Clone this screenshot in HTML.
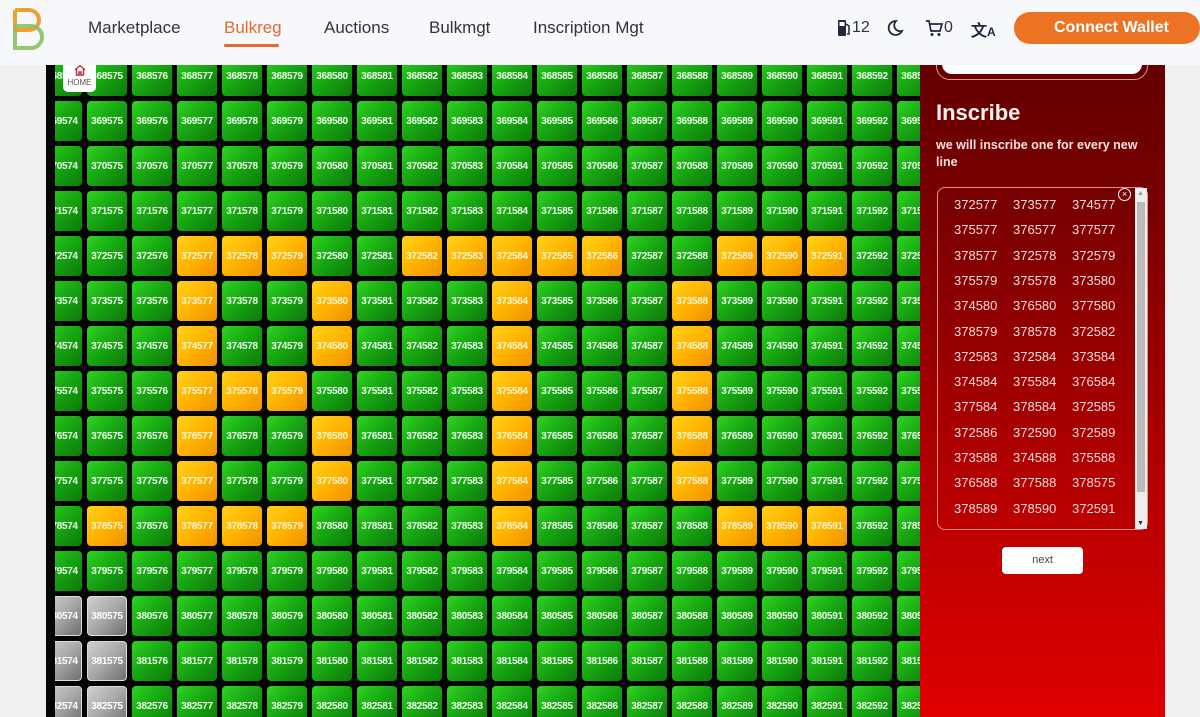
<!DOCTYPE html><html><head><meta charset="utf-8"><style>
*{margin:0;padding:0;box-sizing:border-box}
body{width:1200px;height:717px;overflow:hidden;background:#f0f0f0;font-family:"Liberation Sans",sans-serif;position:relative}
#grid{position:absolute;left:46px;top:0;width:874px;height:717px;background:#050505;overflow:hidden}
.c{position:absolute;width:40px;height:40px;border-radius:4px;background:linear-gradient(135deg,#2fd422 0%,#18a812 45%,#0c7a0a 100%);color:#eaffea;font-size:10px;font-weight:bold;display:flex;align-items:center;justify-content:center;letter-spacing:-0.3px}
.c.o{background:linear-gradient(135deg,#ffd21a 0%,#ffb300 50%,#f09000 100%);color:#fff6d0}
.c.g{background:linear-gradient(135deg,#d0d0d0 0%,#a8a8a8 50%,#6e6e6e 100%);color:#fff;border:1px solid #ddd}
header{position:absolute;left:0;top:0;width:1200px;height:65px;background:#f6f8fb;z-index:5}
.nav{position:absolute;top:18px;font-size:17px;color:#333}
#side{position:absolute;left:920px;top:0;width:245px;height:717px;background:linear-gradient(180deg,#5a0000 0%,#7a0000 30%,#b00000 65%,#e00000 100%)}
.ta{position:absolute;left:937px;top:187px;width:211px;height:343px;border:1px solid #e89090;border-radius:8px;overflow:hidden}
.ta span{position:absolute;font-size:13px;color:#f8d8d8}
</style></head><body>
<div id="grid"></div>
<div style="position:absolute;left:46px;top:0;width:9px;height:717px;background:#050505;z-index:3"></div>
<div style="position:absolute;left:63px;top:62px;width:33px;height:30px;background:#fff;border-radius:0 0 5px 5px;z-index:4;text-align:center;font-size:8px;color:#555;padding-top:2px"><svg width="14" height="12" viewBox="0 0 14 12"><path d="M2 6L7 1.5L12 6M3.5 5v6h7V5M6 11V8h2v3" fill="none" stroke="#c0304a" stroke-width="1.5"/></svg><br>HOME</div>
<header>
<svg style="position:absolute;left:12px;top:6px" width="34" height="46" viewBox="0 0 34 46"><path d="M3 4H17A10 10 0 0 1 17 24H3V4" fill="none" stroke="#f0a030" stroke-width="4"/><path d="M3 20H19A11 11 0 0 1 19 42H3V20" fill="none" stroke="#8cc060" stroke-width="4" opacity=".9"/></svg>
<div class="nav" style="left:88px">Marketplace</div>
<div class="nav" style="left:224px;color:#e26a2c">Bulkreg</div>
<div style="position:absolute;left:224px;top:44px;width:55px;height:3px;background:#e26a2c;border-radius:2px"></div>
<div class="nav" style="left:324px">Auctions</div>
<div class="nav" style="left:429px">Bulkmgt</div>
<div class="nav" style="left:533px">Inscription Mgt</div>
<svg style="position:absolute;left:837px;top:19px" width="14" height="18" viewBox="0 0 14 18"><rect x="1" y="1" width="8" height="16" rx="1" fill="#1e2a3a"/><rect x="2.5" y="3" width="5" height="4" fill="#fff"/><path d="M9 5l3 2v8h-2" fill="none" stroke="#1e2a3a" stroke-width="1.5"/></svg>
<div style="position:absolute;left:852px;top:19px;font-size:16px;color:#333">12</div>
<svg style="position:absolute;left:886px;top:19px" width="18" height="18" viewBox="0 0 18 18"><path d="M10 2A7 7 0 1 0 16 12A6 6 0 0 1 10 2Z" fill="none" stroke="#1e2a3a" stroke-width="1.8"/></svg>
<svg style="position:absolute;left:925px;top:19px" width="18" height="18" viewBox="0 0 18 18"><path d="M1 2h3l2 10h9l2-7H5" fill="none" stroke="#1e2a3a" stroke-width="1.7"/><circle cx="7" cy="15.5" r="1.5" fill="#1e2a3a"/><circle cx="14" cy="15.5" r="1.5" fill="#1e2a3a"/></svg>
<div style="position:absolute;left:944px;top:19px;font-size:16px;color:#333">0</div>
<div style="position:absolute;left:971px;top:17px;font-size:16px;color:#1e2a3a;font-weight:bold">文<span style="font-size:12px">A</span></div>
<div style="position:absolute;left:1014px;top:12px;width:186px;height:32px;background:#ec7324;border-radius:16px;color:#fff;font-weight:bold;font-size:16px;line-height:32px;padding-left:40px">Connect Wallet</div>
</header>
<div id="side">
<div style="position:absolute;left:16px;top:45px;width:212px;height:35px;border:1px solid #e89090;border-radius:14px"></div>
<div style="position:absolute;left:22px;top:50px;width:200px;height:24px;background:#fff;border-radius:10px"></div>
<div style="position:absolute;left:16px;top:100px;color:#fff3f3;font-weight:bold;font-size:22px">Inscribe</div>
<div style="position:absolute;left:16px;top:137px;width:215px;color:#fbe0e0;font-weight:bold;font-size:12.5px;line-height:17px">we will inscribe one for every new line</div>
</div>
<div class="ta" id="ta"></div>
<div style="position:absolute;left:1135px;top:188px;width:12px;height:341px;background:#eee"><div style="position:absolute;left:2px;top:14px;width:8px;height:290px;background:#bbb"></div><div style="position:absolute;left:2px;bottom:2px;font-size:7px;color:#333">▼</div><div style="position:absolute;left:2px;top:2px;font-size:7px;color:#999">▲</div></div>
<div style="position:absolute;left:1118px;top:188px;width:13px;height:13px;border:1.5px solid #fff;border-radius:50%;color:#fff;font-size:9px;line-height:10px;text-align:center">×</div>
<div style="position:absolute;left:1002px;top:547px;width:81px;height:27px;background:#fff;border-radius:4px;font-size:11px;color:#444;text-align:center;line-height:27px">next</div>
<script>
var g=document.getElementById('grid'),h='';
var O={372:[577,578,579,582,583,584,585,586,589,590,591],373:[577,580,584,588],374:[577,580,584,588],375:[577,578,579,584,588],376:[577,580,584,588],377:[577,580,584,588],378:[575,577,578,579,584,589,590,591]};
for(var r=0;r<15;r++){var R=368+r;for(var i=0;i<20;i++){var C=574+i;var cls='c';if(O[R]&&O[R].indexOf(C)>=0)cls+=' o';if(R>=380&&C<=575)cls+=' g';h+='<div class="'+cls+'" style="left:'+(-4+45*i)+'px;top:'+(56+45*r)+'px">'+(R*1000+C)+'</div>';}}
g.innerHTML=h;
var L=[372577,373577,374577,375577,376577,377577,378577,372578,372579,375579,375578,373580,374580,376580,377580,378579,378578,372582,372583,372584,373584,374584,375584,376584,377584,378584,372585,372586,372590,372589,373588,374588,375588,376588,377588,378575,378589,378590,372591,373591,374591,375591];
var t='';for(var k=0;k<L.length;k++){t+='<span style="left:'+(16+(k%3)*59)+'px;top:'+(9+Math.floor(k/3)*25.3)+'px">'+L[k]+'</span>';}
document.getElementById('ta').innerHTML=t;
</script>
</body></html>
